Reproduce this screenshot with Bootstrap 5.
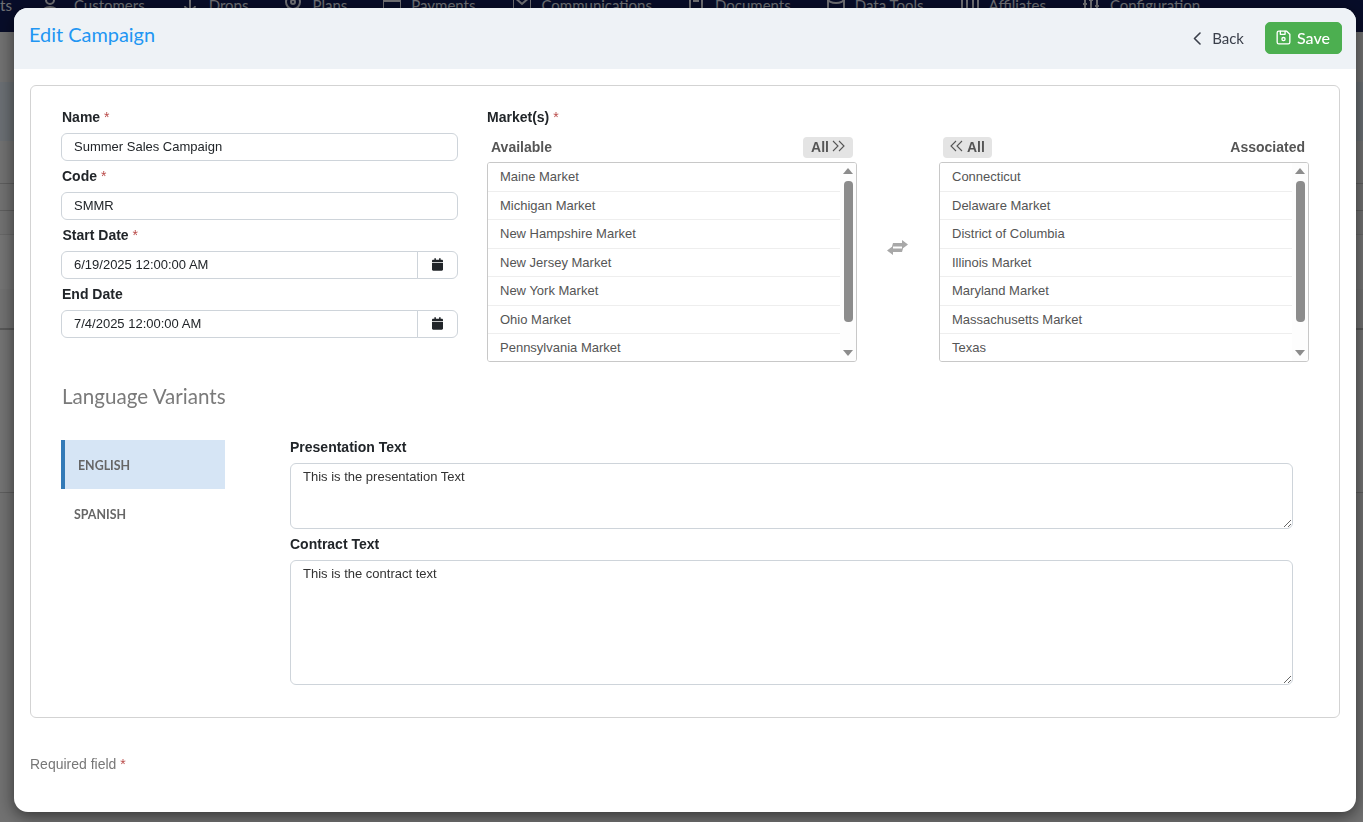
<!DOCTYPE html>
<html lang="en">
<head>
<meta charset="utf-8">
<title>Edit Campaign</title>
<link rel="stylesheet" href="https://cdn.jsdelivr.net/npm/bootstrap@5.3.0/dist/css/bootstrap.min.css">
<style>
html,body{height:100%;overflow:hidden}
body{font-family:"Liberation Sans",Arial,sans-serif;font-size:14px;color:#212529;background:#e2e2e2}
.topnav{height:32px;background:#101a52;overflow:hidden;color:#dfe0e8;font-family:Lato,sans-serif;font-size:15px;line-height:22px}
.topnav-row{margin-top:-6px;white-space:nowrap}
.topnav-item{display:flex;align-items:center;gap:10px}
.topnav-item svg{width:18px;height:18px;fill:none;stroke:currentColor;stroke-width:2}
.tn1{margin-left:30px}.tn2{margin-left:36px}.tn3{margin-left:36px}.tn4{margin-left:36px}.tn5{margin-left:38px}.tn6{margin-left:35px}.tn7{margin-left:36px}.tn8{margin-left:37px}.tn9{margin-left:36px}
.band-a{height:50px}
.band-b{height:59px;background:#d4dde6}
.band-c{height:43px;border-bottom:1px solid #bcbcbc}
.band-d{height:27px;border-bottom:1px solid #bcbcbc}
.band-e{height:23px}
.band-f{height:55px;background:#e8e8e8;border-top:1px solid #cfcfcf}
.band-g{height:41px;border-bottom:2px solid #b0b0b0}
.band-h{height:163px;background:#e6e6e6;border-bottom:1px solid #bcbcbc}
.modal.shown{display:block;overflow:hidden;z-index:1060}
.edit-dialog{max-width:none;width:1342px;margin:8px 0 0 14px}
.edit-content{height:804px;border:0;border-radius:14px;box-shadow:0 4px 16px rgba(0,0,0,.55);overflow:hidden}
.edit-head{height:61px;background:#eef2f6;border:0;padding:0 14px 2px 15px;border-radius:0}
.edit-title{font-family:Lato,sans-serif;font-size:19.9px;font-weight:400;color:#2196f3;margin:-6px 0 0}
.head-actions{gap:21px}
.back-btn{font-family:Lato,sans-serif;font-size:15px;color:#3a3f4a;gap:11px;padding:1px 0 0;border:0}
.back-btn svg{width:8px;height:13px}
.save-btn{font-family:Lato,sans-serif;font-size:16px;font-weight:500;width:77px;height:32px;padding:0 3px 0 0;background:#4caf50;border-color:#4caf50;border-radius:5px;gap:4px;color:#fff}
.save-btn svg{width:19px;height:19px}
.edit-body{padding:16px}
.edit-card{border:1px solid #d3d3d3;border-radius:6px;padding:21px 30px 27px;height:633px}
.left-col{width:397px;flex:none}
.right-col{width:822px;flex:none}
.field-gap{gap:29px}
.fld-label{display:block;font-weight:700;font-size:14px;line-height:21px;margin:0 0 5px;color:#212529}
.left-col .fld-label{margin-left:1px}
.left-col .nudge{margin-left:1.5px}
.fld-group{margin-bottom:5px}
.req{color:#b94a48;font-weight:400}
.fld{font-size:13px;line-height:21px;padding:1px 12px 3px;height:28px;min-height:0;border-color:#ced4da;border-radius:6px;color:#212529}
.fld-text{height:auto;color:#333;padding-top:2px}
.tall-a{height:66px}
.tall-b{height:125px}
.cal-btn{width:41px;justify-content:center;padding:0;background:#fff;border-color:#ced4da;border-radius:0 6px 6px 0}
.cal-btn svg{width:11px;height:13px;fill:#212529;margin-top:-2px}
.pane{width:370px;flex:none}
.pane-mid{width:82px;flex:none;padding:4px 2px 0 0}
.swap-icon{width:21px;height:15px;fill:#a8a8a8}
.pane-head{height:21px;margin:9px 0 4px;padding:0 4px;color:#555;font-weight:700;font-size:14px}
.all-btn{height:21px;background:#e4e4e4;border:0;border-radius:4px;color:#555;font-weight:700;font-size:14px;gap:4px}
.all-next{padding:0 8px;gap:3px}
.all-prev{padding:0 7px}
.all-btn svg{width:13px;height:12px;fill:none;stroke:#555;stroke-width:1.1;margin-top:-3px}
.pick-box{height:200px;border:1px solid #c8c8c8;border-radius:3px;overflow:hidden}
.pick-item{height:28.5px;line-height:27.5px;padding:0 12px;font-size:13px;color:#555;border-color:#eee;background:#fff}
.rail{width:16px;flex:none;padding-top:5px;background:#fdfdfd}
.rail-up,.rail-down{width:0;height:0;border-left:5px solid transparent;border-right:5px solid transparent}
.rail-up{border-bottom:6px solid #8c8c8c;margin-bottom:7px}
.rail-down{border-top:6px solid #8c8c8c;margin-top:28px}
.rail-thumb{width:9px;height:141px;background:#8c8c8c;border-radius:4px}
.lang-title{font-family:Lato,sans-serif;font-size:20.6px;font-weight:400;line-height:22px;color:#7a7a7a;margin:23px 0 33px 1px}
.lang-tabs{width:164px;flex:none;margin-right:65px}
.lang-tab{height:49px;font-family:Lato,sans-serif;font-size:12.4px;font-weight:700;color:#666;padding:3px 0 0 13px;border:0;border-radius:0;background:transparent;text-transform:uppercase}
.lang-tab.active{background:#d6e5f5;border-left:4px solid #337ab7;color:#666}
.lang-form{width:1003px;flex:none;margin-top:-3px}
.req-note{margin-top:36px;font-size:14px;line-height:21px;color:#777}
</style>
</head>
<body>
<div class="topnav">
  <div class="topnav-row d-flex">
    <span class="topnav-item">ts</span>
    <span class="topnav-item tn1"><svg viewBox="0 0 18 18"><circle cx="8" cy="4" r="4"/><path d="M1 17c0-4 3-6 7-6s7 2 7 6"/></svg><span class="ms-1">Customers</span></span>
    <span class="topnav-item tn2"><svg viewBox="0 0 18 18"><path d="M9 0v12M4 10c0 4 10 4 10 0"/></svg>Drops</span>
    <span class="topnav-item tn3"><svg viewBox="0 0 18 18"><circle cx="9" cy="6" r="7"/><circle cx="9" cy="6" r="2"/></svg>Plans</span>
    <span class="topnav-item tn4"><svg viewBox="0 0 18 18"><path d="M0 0v16M18 0v16M0 5h18"/></svg>Payments</span>
    <span class="topnav-item tn5"><svg viewBox="0 0 18 18"><path d="M0 0v16h18V0H0l9 8 9-8"/></svg>Communications</span>
    <span class="topnav-item tn6"><svg viewBox="0 0 18 18"><path d="M3 0v16h12V0M6 5h6"/></svg>Documents</span>
    <span class="topnav-item tn7"><svg viewBox="0 0 18 18"><ellipse cx="9" cy="3" rx="8" ry="4"/><path d="M1 3v10M17 3v10"/></svg>Data Tools</span>
    <span class="topnav-item tn8"><svg viewBox="0 0 18 18"><path d="M1 2h16v14H1zM6 2v14M12 2v14"/></svg>Affiliates</span>
    <span class="topnav-item tn9"><svg viewBox="0 0 18 18"><path d="M3 0v16M9 0v16M15 0v16M1 8h4M7 4h4M13 10h4"/></svg>Configuration</span>
  </div>
</div>
<div class="band-a"></div>
<div class="band-b"></div>
<div class="band-c"></div>
<div class="band-d"></div>
<div class="band-e"></div>
<div class="band-f"></div>
<div class="band-g"></div>
<div class="band-h"></div>

<div class="modal-backdrop show"></div>

<div class="modal shown" tabindex="-1">
  <div class="modal-dialog edit-dialog">
    <div class="modal-content edit-content">
      <div class="modal-header edit-head d-flex justify-content-between align-items-center">
        <h5 class="modal-title edit-title">Edit Campaign</h5>
        <div class="d-flex align-items-center head-actions">
          <button type="button" class="btn back-btn d-flex align-items-center"><svg viewBox="0 0 8 13" fill="none" stroke="#3a3f4a" stroke-width="1.6" stroke-linecap="round" stroke-linejoin="round"><path d="M7 1L1.5 6.5L7 12"/></svg>Back</button>
          <button type="button" class="btn btn-success save-btn d-flex align-items-center justify-content-center"><svg viewBox="0 0 24 24" fill="none" stroke="#fff" stroke-width="1.7" stroke-linecap="round" stroke-linejoin="round"><path d="M6 4h10l4 4v10a2 2 0 0 1-2 2H6a2 2 0 0 1-2-2V6a2 2 0 0 1 2-2"/><circle cx="12" cy="14" r="2"/><path d="M14 4v4H8V4"/></svg>Save</button>
        </div>
      </div>
      <div class="modal-body edit-body">
        <div class="card edit-card">
          <div class="d-flex field-gap">
            <div class="left-col">
              <div class="fld-group">
                <label class="fld-label">Name <span class="req">*</span></label>
                <input class="form-control fld" value="Summer Sales Campaign">
              </div>
              <div class="fld-group">
                <label class="fld-label">Code <span class="req">*</span></label>
                <input class="form-control fld" value="SMMR">
              </div>
              <div class="fld-group">
                <label class="fld-label nudge">Start Date <span class="req">*</span></label>
                <div class="input-group">
                  <input class="form-control fld" value="6/19/2025 12:00:00 AM">
                  <span class="input-group-text cal-btn"><svg viewBox="0 0 448 512"><path d="M12 192h424c6.6 0 12 5.4 12 12v260c0 26.5-21.5 48-48 48H48c-26.5 0-48-21.5-48-48V204c0-6.6 5.4-12 12-12zm436-44v-36c0-26.5-21.5-48-48-48h-48V12c0-6.6-5.4-12-12-12h-40c-6.6 0-12 5.4-12 12v52H160V12c0-6.6-5.4-12-12-12h-40c-6.6 0-12 5.4-12 12v52H48C21.5 64 0 85.500 0 112v36c0 6.600 5.400 12 12 12h424c6.600 0 12-5.400 12-12z"/></svg></span>
                </div>
              </div>
              <div class="fld-group">
                <label class="fld-label">End Date</label>
                <div class="input-group">
                  <input class="form-control fld" value="7/4/2025 12:00:00 AM">
                  <span class="input-group-text cal-btn"><svg viewBox="0 0 448 512"><path d="M12 192h424c6.6 0 12 5.4 12 12v260c0 26.5-21.5 48-48 48H48c-26.5 0-48-21.5-48-48V204c0-6.6 5.4-12 12-12zm436-44v-36c0-26.5-21.5-48-48-48h-48V12c0-6.6-5.4-12-12-12h-40c-6.6 0-12 5.4-12 12v52H160V12c0-6.6-5.4-12-12-12h-40c-6.6 0-12 5.4-12 12v52H48C21.5 64 0 85.500 0 112v36c0 6.600 5.400 12 12 12h424c6.600 0 12-5.400 12-12z"/></svg></span>
                </div>
              </div>
            </div>
            <div class="right-col">
              <label class="fld-label mb-0">Market(s) <span class="req">*</span></label>
              <div class="d-flex">
                <div class="pane">
                  <div class="pane-head d-flex justify-content-between align-items-center">
                    <span>Available</span>
                    <button type="button" class="btn all-btn all-next d-flex align-items-center">All<svg viewBox="0 0 13 12"><path d="M1 1l5 5-5 5M7 1l5 5-5 5"/></svg></button>
                  </div>
                  <div class="pick-box d-flex">
                    <div class="list-group list-group-flush rounded-0 flex-grow-1">
                      <div class="list-group-item pick-item">Maine Market</div>
                      <div class="list-group-item pick-item">Michigan Market</div>
                      <div class="list-group-item pick-item">New Hampshire Market</div>
                      <div class="list-group-item pick-item">New Jersey Market</div>
                      <div class="list-group-item pick-item">New York Market</div>
                      <div class="list-group-item pick-item">Ohio Market</div>
                      <div class="list-group-item pick-item">Pennsylvania Market</div>
                    </div>
                    <div class="rail d-flex flex-column align-items-center">
                      <div class="rail-up"></div><div class="rail-thumb"></div><div class="rail-down"></div>
                    </div>
                  </div>
                </div>
                <div class="pane-mid d-flex align-items-center justify-content-center">
                  <svg class="swap-icon" viewBox="0 0 21 15"><path d="M6 3h9V0l6 4.500-6 4.500V6.500H5zM15 12H6v3L0 10.500 6 6v2.500h10z"/></svg>
                </div>
                <div class="pane">
                  <div class="pane-head d-flex justify-content-between align-items-center">
                    <button type="button" class="btn all-btn all-prev d-flex align-items-center"><svg viewBox="0 0 13 12"><path d="M6 1L1 6l5 5M12 1L7 6l5 5"/></svg>All</button>
                    <span>Associated</span>
                  </div>
                  <div class="pick-box d-flex">
                    <div class="list-group list-group-flush rounded-0 flex-grow-1">
                      <div class="list-group-item pick-item">Connecticut</div>
                      <div class="list-group-item pick-item">Delaware Market</div>
                      <div class="list-group-item pick-item">District of Columbia</div>
                      <div class="list-group-item pick-item">Illinois Market</div>
                      <div class="list-group-item pick-item">Maryland Market</div>
                      <div class="list-group-item pick-item">Massachusetts Market</div>
                      <div class="list-group-item pick-item">Texas</div>
                    </div>
                    <div class="rail d-flex flex-column align-items-center">
                      <div class="rail-up"></div><div class="rail-thumb"></div><div class="rail-down"></div>
                    </div>
                  </div>
                </div>
              </div>
            </div>
          </div>
          <h5 class="lang-title">Language Variants</h5>
          <div class="d-flex">
            <div class="nav flex-column lang-tabs">
              <a class="nav-link lang-tab active d-flex align-items-center" href="#">English</a>
              <a class="nav-link lang-tab d-flex align-items-center" href="#">Spanish</a>
            </div>
            <div class="lang-form">
              <div class="fld-group">
                <label class="fld-label">Presentation Text</label>
                <textarea class="form-control fld fld-text tall-a">This is the presentation Text</textarea>
              </div>
              <div class="fld-group">
                <label class="fld-label">Contract Text</label>
                <textarea class="form-control fld fld-text tall-b">This is the contract text</textarea>
              </div>
            </div>
          </div>
        </div>
        <div class="req-note">Required field <span class="req">*</span></div>
      </div>
    </div>
  </div>
</div>
<script src="https://cdn.jsdelivr.net/npm/bootstrap@5.3.0/dist/js/bootstrap.bundle.min.js"></script>
</body>
</html>
